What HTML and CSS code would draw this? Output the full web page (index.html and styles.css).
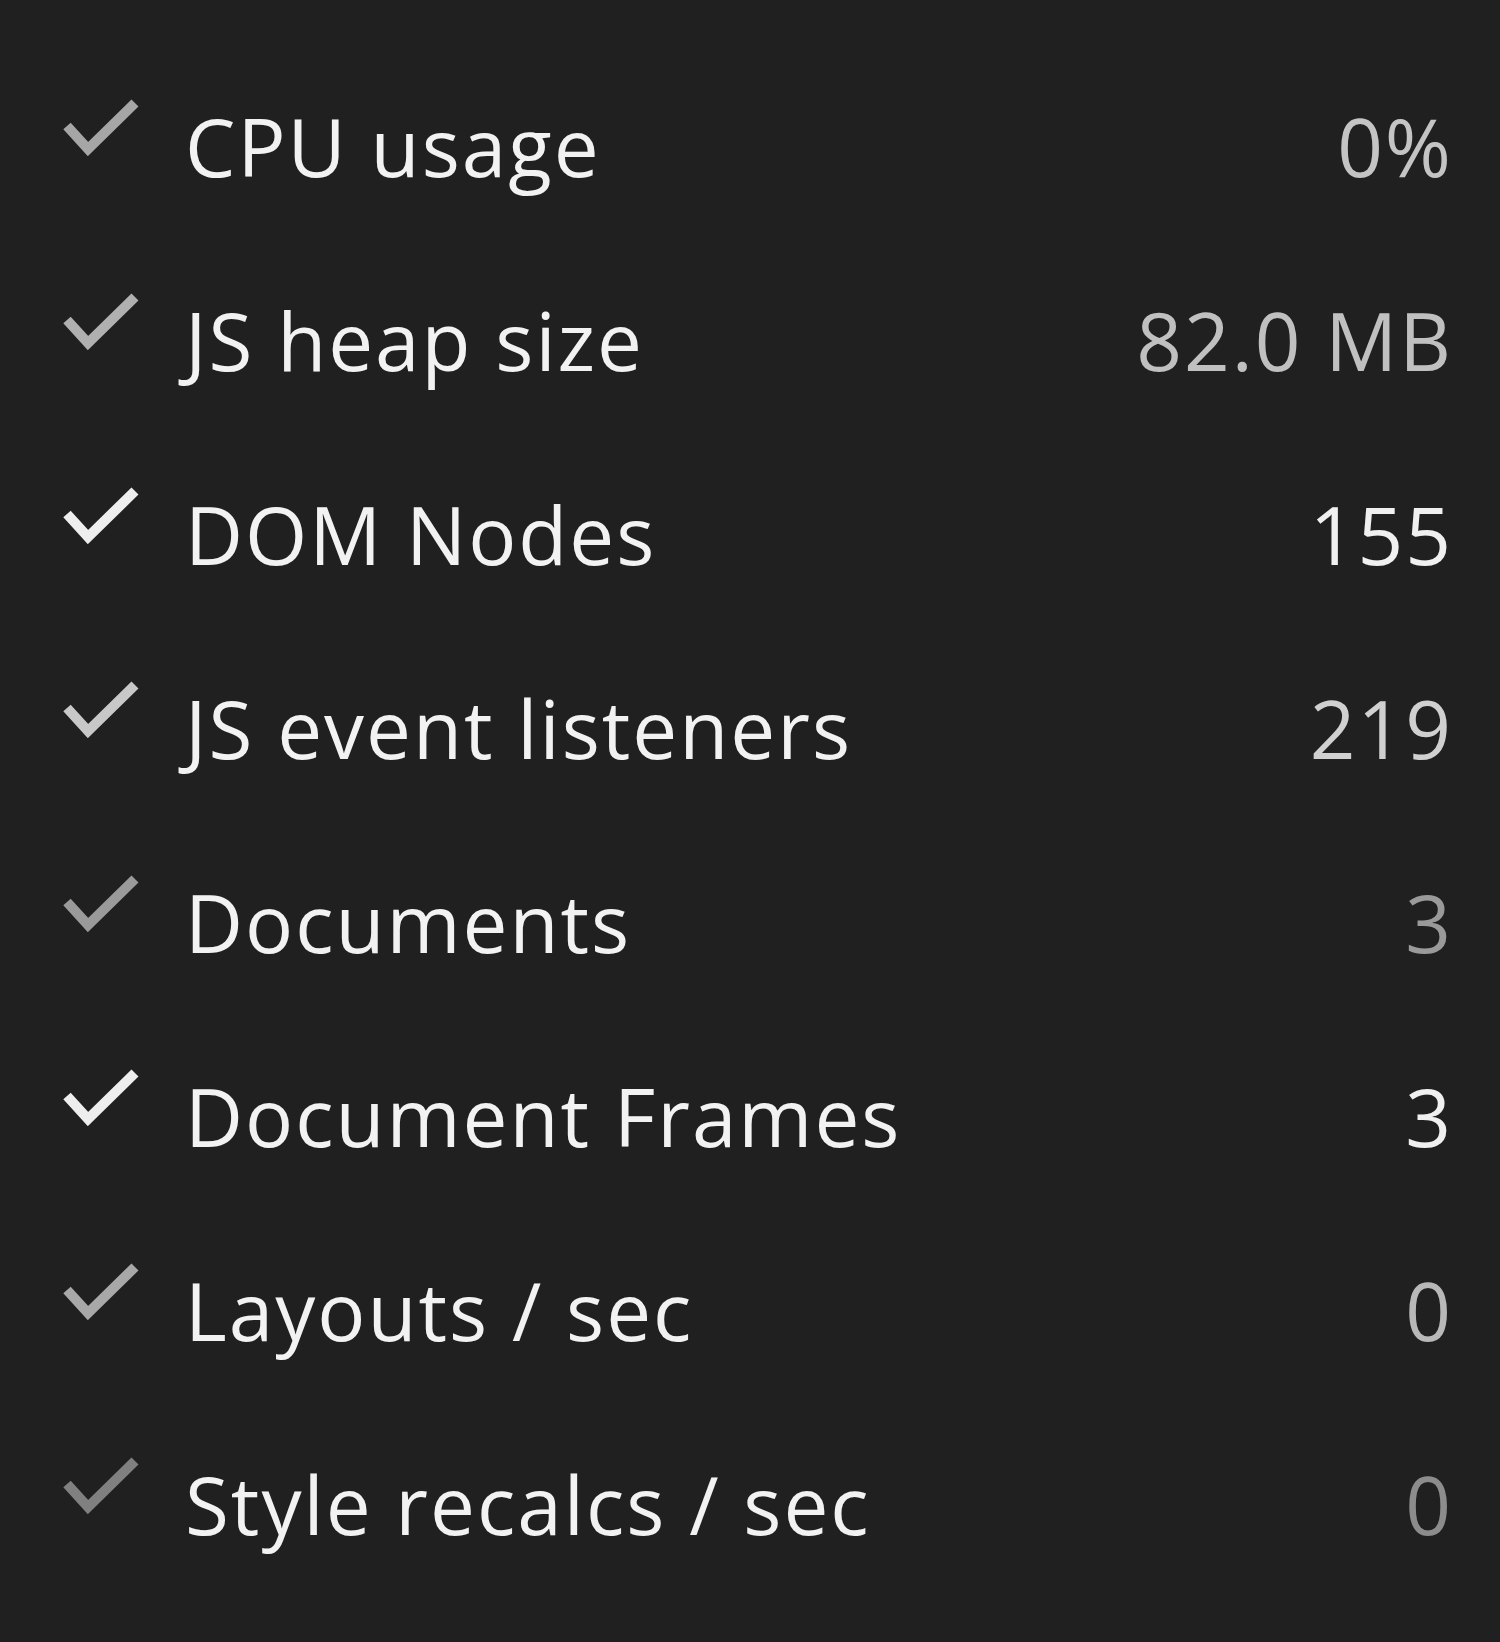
FILE: index.html
```html
<!DOCTYPE html>
<html lang="en">
<head>
<meta charset="utf-8">
<title>Performance monitor</title>
<link rel="stylesheet" href="styles.css">
</head>
<body>
<ul class="metrics">
  <li class="metric t1">
    <svg class="check" viewBox="0 0 80 60" width="80" height="60"><path d="M7 30 L28 53 L75 7"/></svg>
    <span class="label">CPU usage</span>
    <span class="value">0%</span>
  </li>
  <li class="metric t2">
    <svg class="check" viewBox="0 0 80 60" width="80" height="60"><path d="M7 30 L28 53 L75 7"/></svg>
    <span class="label">JS heap size</span>
    <span class="value">82.0 MB</span>
  </li>
  <li class="metric t3">
    <svg class="check" viewBox="0 0 80 60" width="80" height="60"><path d="M7 30 L28 53 L75 7"/></svg>
    <span class="label">DOM Nodes</span>
    <span class="value">155</span>
  </li>
  <li class="metric t4">
    <svg class="check" viewBox="0 0 80 60" width="80" height="60"><path d="M7 30 L28 53 L75 7"/></svg>
    <span class="label">JS event listeners</span>
    <span class="value">219</span>
  </li>
  <li class="metric t5">
    <svg class="check" viewBox="0 0 80 60" width="80" height="60"><path d="M7 30 L28 53 L75 7"/></svg>
    <span class="label">Documents</span>
    <span class="value">3</span>
  </li>
  <li class="metric t3">
    <svg class="check" viewBox="0 0 80 60" width="80" height="60"><path d="M7 30 L28 53 L75 7"/></svg>
    <span class="label">Document Frames</span>
    <span class="value">3</span>
  </li>
  <li class="metric t6">
    <svg class="check" viewBox="0 0 80 60" width="80" height="60"><path d="M7 30 L28 53 L75 7"/></svg>
    <span class="label">Layouts / sec</span>
    <span class="value">0</span>
  </li>
  <li class="metric t7">
    <svg class="check" viewBox="0 0 80 60" width="80" height="60"><path d="M7 30 L28 53 L75 7"/></svg>
    <span class="label">Style recalcs / sec</span>
    <span class="value">0</span>
  </li>
</ul>
</body>
</html>
```

FILE: styles.css
```css
html, body {
  margin: 0;
  padding: 0;
  background: #202020;
}
body {
  width: 1500px;
  height: 1642px;
  overflow: hidden;
  font-family: "Open Sans", "Noto Sans", sans-serif;
  color: #f0f0f0;
}
.metrics {
  list-style: none;
  margin: 0;
  padding: 49px 49px 0 60px;
  display: flex;
  flex-direction: column;
}
.metric {
  display: flex;
  align-items: center;
  height: 194px;
  font-size: 80px;
  line-height: 194px;
  letter-spacing: 2px;
}
.check {
  flex: none;
  width: 80px;
  height: 60px;
  margin-right: 45px;
  margin-top: -40px;
}
.check path {
  fill: none;
  stroke: currentColor;
  stroke-width: 10;
}
.label {
  flex: 1;
  color: #f2f2f2;
}
.value {
  flex: none;
  text-align: right;
  margin-right: -2px;
}
.t1 .check { color: #a6a6a6; }
.t1 .value { color: #c4c4c4; }
.t2 .check { color: #b0b0b0; }
.t2 .value { color: #c0c0c0; }
.t3 .check { color: #eeeeee; }
.t3 .value { color: #f0f0f0; }
.t4 .check { color: #c8c8c8; }
.t4 .value { color: #d0d0d0; }
.t5 .check { color: #9a9a9a; }
.t5 .value { color: #9a9a9a; }
.t6 .check { color: #a8a8a8; }
.t6 .value { color: #b8b8b8; }
.t7 .check { color: #808080; }
.t7 .value { color: #8c8c8c; }
```
